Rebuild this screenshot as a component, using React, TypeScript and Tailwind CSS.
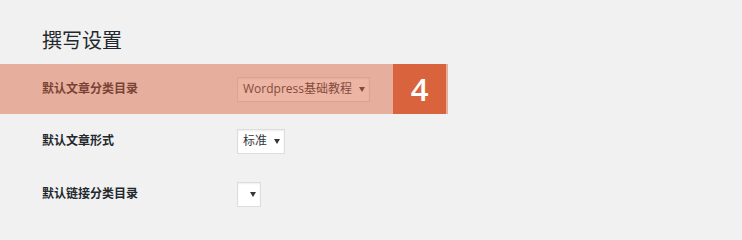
import React from "react";

const FONT = '"Open Sans", "Noto Sans CJK SC", sans-serif';

function Arrow() {
  return (
    <svg width="6" height="5" viewBox="0 0 6 5" className="shrink-0">
      <path d="M0 0 L6 0 L3 5 Z" fill="#32373c" />
    </svg>
  );
}

function Select({ text, className = "" }: { text?: string; className?: string }) {
  return (
    <div
      className={`flex h-[25px] items-center gap-[7px] border border-[#dddddd] bg-white pl-[5px] pr-[4px] text-[12px] text-[#32373c] shadow-[inset_0_1px_2px_rgba(0,0,0,0.07)] ${className}`}
    >
      {text ? <span className="whitespace-nowrap leading-none">{text}</span> : null}
      <Arrow />
    </div>
  );
}

function Row({ label, children, className = "" }: { label: string; children: React.ReactNode; className?: string }) {
  return (
    <div className={`flex items-center ${className}`}>
      <div className="w-[237px] shrink-0 pl-[42px] text-[12px] font-bold text-[#23282d]">{label}</div>
      {children}
    </div>
  );
}

export default function App() {
  return (
    <div className="h-[240px] w-[742px] overflow-hidden bg-[#f1f1f1]" style={{ fontFamily: FONT }}>
      <div className="pl-[42px] pt-[29px] text-[20px] leading-[24px] text-[#23282d]">撰写设置</div>
      <div className="relative mt-[11px] h-[50px] w-[448px]">
        <Row label="默认文章分类目录" className="h-full">
          <Select text="Wordpress基础教程" />
        </Row>
        <div className="pointer-events-none absolute inset-0 bg-[#d9623d]/[0.47]" />
        <div className="absolute bottom-0 left-[393px] top-0 flex w-[53px] items-center justify-center bg-[#d9633c] text-[31px] font-semibold leading-none text-white">
          4
        </div>
      </div>
      <Row label="默认文章形式" className="h-[54px]">
        <Select text="标准" />
      </Row>
      <Row label="默认链接分类目录" className="h-[52px]">
        <Select className="w-[24px] justify-end" />
      </Row>
    </div>
  );
}
